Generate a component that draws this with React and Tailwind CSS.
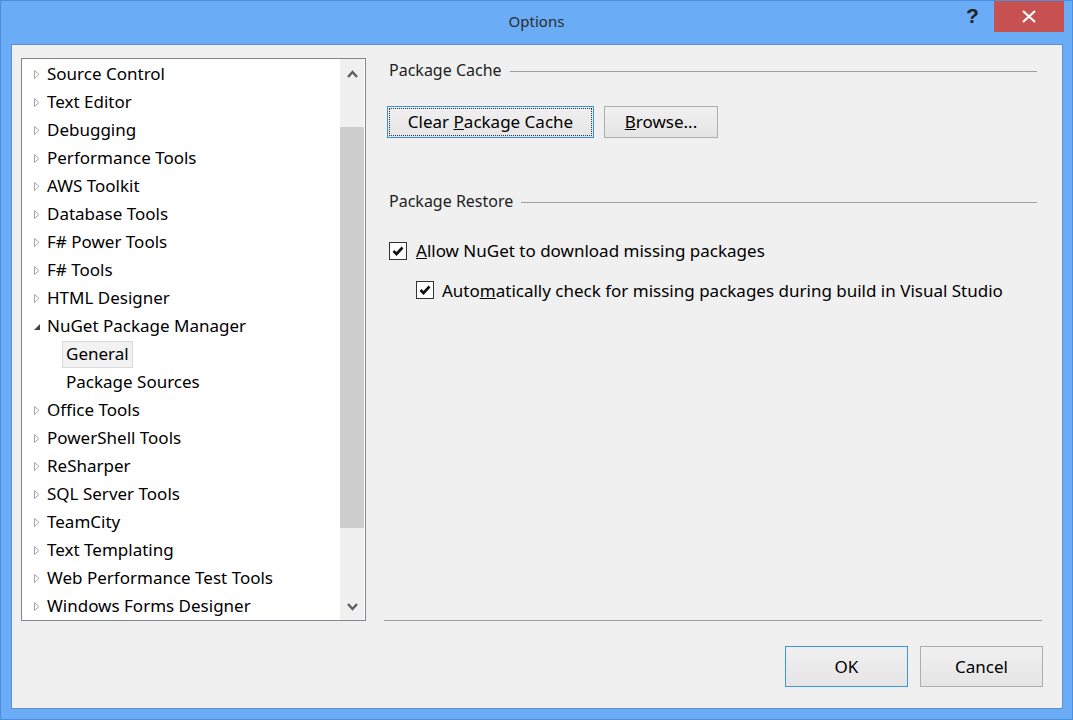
import React from "react";

const font = { fontFamily: '"Noto Sans", "Open Sans", sans-serif' };

function Closed() {
  return (
    <svg width="6" height="9" viewBox="0 0 6 9" className="shrink-0">
      <path d="M0.5 0.5 L5 4.5 L0.5 8.5 Z" fill="none" stroke="#a6a6a6" strokeWidth="1" />
    </svg>
  );
}

function Open() {
  return (
    <svg width="6" height="9" viewBox="0 0 6 9" className="shrink-0">
      <path d="M6 2 L6 8 L0 8 Z" fill="#444" />
    </svg>
  );
}

const items = [
  ["c", "Source Control"],
  ["c", "Text Editor"],
  ["c", "Debugging"],
  ["c", "Performance Tools"],
  ["c", "AWS Toolkit"],
  ["c", "Database Tools"],
  ["c", "F# Power Tools"],
  ["c", "F# Tools"],
  ["c", "HTML Designer"],
  ["o", "NuGet Package Manager"],
  ["s", "General"],
  ["k", "Package Sources"],
  ["c", "Office Tools"],
  ["c", "PowerShell Tools"],
  ["c", "ReSharper"],
  ["c", "SQL Server Tools"],
  ["c", "TeamCity"],
  ["c", "Text Templating"],
  ["c", "Web Performance Test Tools"],
  ["c", "Windows Forms Designer"],
];

function Check() {
  return (
    <div className="w-[18px] h-[18px] border border-[#333] bg-white flex items-center justify-center shrink-0">
      <svg width="12" height="10" viewBox="0 0 12 10">
        <path d="M1.5 5 L4.5 8 L10.5 1.5" fill="none" stroke="#111" strokeWidth="2.6" />
      </svg>
    </div>
  );
}

export default function App() {
  return (
    <div
      className="w-[1073px] h-[720px] bg-[#6aacf6] border border-[#4d8fdc] relative flex flex-col text-black"
      style={font}
    >
      {/* title bar */}
      <div className="h-[43px] flex items-center justify-center shrink-0">
        <span className="text-[15px] text-[#2c2c2c] mt-[-2px]">Options</span>
      </div>
      <div className="absolute top-[4px] left-[965px] text-[21px] font-bold text-[#222] leading-none" style={{ fontFamily: '"Liberation Sans", sans-serif' }}>
        ?
      </div>
      <div className="absolute top-0 left-[993px] w-[70px] h-[31px] bg-[#c75050] flex items-center justify-center">
        <svg width="14" height="13" viewBox="0 0 14 13">
          <path d="M1 1 L13 12 M13 1 L1 12" stroke="#fff" strokeWidth="2.2" />
        </svg>
      </div>

      {/* client */}
      <div className="ml-[10px] w-[1052px] h-[665px] bg-[#f0f0f0] border border-[#5c90d0] flex flex-row">
        {/* tree */}
        <div className="ml-[9px] mt-[13px] w-[345px] h-[563px] bg-white border border-[#828790] flex flex-row shrink-0">
          <div className="flex-1 flex flex-col pt-[1px]">
            {items.map(([k, t]) => {
              if (k === "s" || k === "k") {
                return (
                  <div key={t} className="h-[28px] flex items-center pl-[40px]">
                    <span
                      className={
                        "h-[27px] flex items-center px-[3px] text-[17px] " +
                        (k === "s" ? "bg-[#f2f2f2] border border-[#dadada]" : "border border-transparent")
                      }
                    >
                      {t}
                    </span>
                  </div>
                );
              }
              return (
                <div key={t} className="h-[28px] flex items-center pl-[12px]">
                  <div className="w-[6px] mr-[7px] flex">{k === "o" ? <Open /> : <Closed />}</div>
                  <span className="text-[17px]">{t}</span>
                </div>
              );
            })}
          </div>
          <div className="w-[24px] bg-[#f0f0f0] flex flex-col items-center mr-[1px]">
            <div className="h-[68px] w-full flex justify-center pt-[11px]">
              <svg width="11" height="8" viewBox="0 0 11 8">
                <path d="M1 7 L5.5 2 L10 7" fill="none" stroke="#606060" strokeWidth="2.5" />
              </svg>
            </div>
            <div className="w-full h-[401px] bg-[#cdcdcd]" />
            <div className="flex-1 w-full flex justify-center items-end pb-[9px]">
              <svg width="11" height="8" viewBox="0 0 11 8">
                <path d="M1 1 L5.5 6 L10 1" fill="none" stroke="#606060" strokeWidth="2.5" />
              </svg>
            </div>
          </div>
        </div>

        {/* right */}
        <div className="ml-[18px] w-[658px] flex flex-col">
          <div className="flex items-center mt-[13px] pl-[5px] h-[24px]">
            <span className="text-[16px] text-[#1e1e1e]">Package Cache</span>
            <div className="flex-1 ml-[8px] mr-[5px] h-px bg-[#a0a0a0] mt-[3px]" />
          </div>
          <div className="flex mt-[24px] pl-[3px] gap-[10px]">
            <button className="w-[207px] h-[32px] border border-[#3c8fe0] bg-gradient-to-b from-[#f0f0f0] to-[#e5e5e5] p-[1px]">
              <div className="w-full h-full border border-dotted border-[#333] flex items-center justify-center text-[17px]">
                Clear&nbsp;<u>P</u>ackage Cache
              </div>
            </button>
            <button className="w-[114px] h-[32px] border border-[#adadad] bg-gradient-to-b from-[#f0f0f0] to-[#e5e5e5] flex items-center justify-center text-[17px]">
              <span>
                <u>B</u>rowse...
              </span>
            </button>
          </div>
          <div className="flex items-center mt-[51px] pl-[5px] h-[24px]">
            <span className="text-[16px] text-[#1e1e1e]">Package Restore</span>
            <div className="flex-1 ml-[8px] mr-[5px] h-px bg-[#a0a0a0] mt-[3px]" />
          </div>
          <div className="flex items-center mt-[25px] pl-[5px] gap-[9px]">
            <Check />
            <span className="text-[17px]">
              <u>A</u>llow NuGet to download missing packages
            </span>
          </div>
          <div className="flex items-center mt-[14px] pl-[32px] gap-[8px]">
            <Check />
            <span className="text-[17px]">
              Auto<u>m</u>atically check for missing packages during build in Visual Studio
            </span>
          </div>
          <div className="flex-1" />
          <div className="h-px bg-[#a0a0a0]" />
          <div className="flex justify-end gap-[12px] mt-[25px] mb-[21px] mr-[-1px]">
            <button className="w-[123px] h-[41px] border border-[#3c94e8] bg-gradient-to-b from-[#f0f0f0] to-[#e5e5e5] text-[17px]">
              OK
            </button>
            <button className="w-[123px] h-[41px] border border-[#adadad] bg-gradient-to-b from-[#f0f0f0] to-[#e5e5e5] text-[17px]">
              Cancel
            </button>
          </div>
        </div>
      </div>
    </div>
  );
}
